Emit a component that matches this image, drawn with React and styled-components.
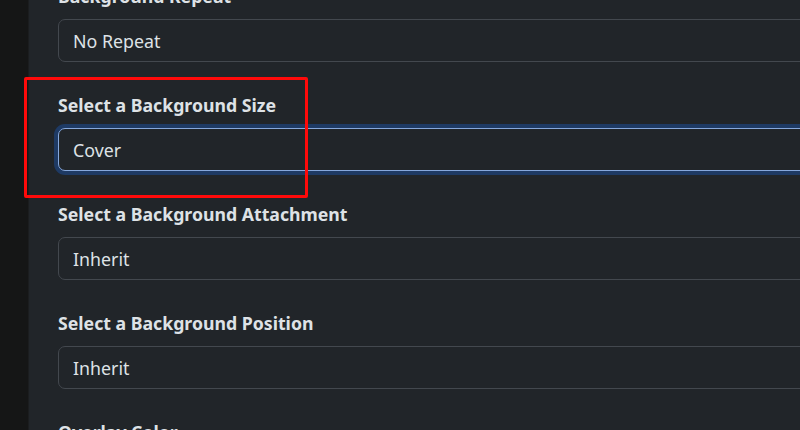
import styled, { createGlobalStyle } from "styled-components";

const GlobalStyle = createGlobalStyle`
  html, body {
    margin: 0;
    padding: 0;
    background: #212529;
    overflow: hidden;
  }
  * { box-sizing: border-box; }
`;

const Page = styled.div`
  display: flex;
  width: 800px;
  height: 430px;
  overflow: hidden;
  position: relative;
  font-family: "Noto Sans", "Open Sans", sans-serif;
  color: #dee2e6;
`;

const Sidebar = styled.div`
  width: 29px;
  flex-shrink: 0;
  background: #151616;
  border-right: 1px solid #1b1d1f;
`;

const Main = styled.div`
  flex: 1;
  background: #212529;
  padding-left: 29px;
  overflow: hidden;
`;

const Form = styled.div`
  margin-top: -16px;
  width: 900px;
`;

const Field = styled.div`
  margin-bottom: 31px;
`;

const Label = styled.div`
  font-size: 17.7px;
  font-weight: 700;
  line-height: 24px;
  margin-bottom: 11px;
  white-space: nowrap;
`;

const Select = styled.div`
  height: 43px;
  display: flex;
  align-items: center;
  padding: 0 14px;
  font-size: 17.8px;
  color: #dee2e6;
  background: #212529;
  border: 1px solid ${(p) => (p.$focused ? "#86a8dc" : "#43484e")};
  border-radius: 7px;
  box-shadow: ${(p) => (p.$focused ? "0 0 0 4px #1e3a64" : "none")};
`;

const Highlight = styled.div`
  position: absolute;
  left: 24px;
  top: 77px;
  width: 284px;
  height: 121px;
  border: 3px solid #ff0a0a;
  border-radius: 2px;
  pointer-events: none;
`;

const fields = [
  { label: "Background Repeat", value: "No Repeat" },
  { label: "Select a Background Size", value: "Cover", focused: true },
  { label: "Select a Background Attachment", value: "Inherit" },
  { label: "Select a Background Position", value: "Inherit" },
  { label: "Overlay Color", value: "" },
];

export default function App() {
  return (
    <>
      <GlobalStyle />
      <Page>
        <Sidebar />
        <Main>
          <Form>
            {fields.map((f) => (
              <Field key={f.label}>
                <Label>{f.label}</Label>
                <Select $focused={f.focused}>{f.value}</Select>
              </Field>
            ))}
          </Form>
        </Main>
        <Highlight />
      </Page>
    </>
  );
}
